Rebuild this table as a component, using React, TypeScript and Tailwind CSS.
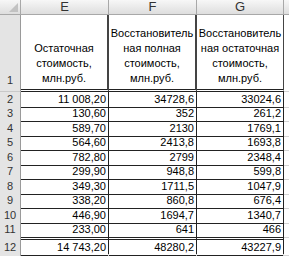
const rows: [string, string, string][] = [
  ["11 008,20", "34728,6", "33024,6"],
  ["130,60", "352", "261,2"],
  ["589,70", "2130", "1769,1"],
  ["564,60", "2413,8", "1693,8"],
  ["782,80", "2799", "2348,4"],
  ["299,90", "948,8", "599,8"],
  ["349,30", "1711,5", "1047,9"],
  ["338,20", "860,8", "676,4"],
  ["446,90", "1694,7", "1340,7"],
  ["233,00", "641", "466"],
];
const total: [string, string, string] = ["14 743,20", "48280,2", "43227,9"];

const grid = "grid grid-cols-[21px_88px_88px_87px_5px]";
const rowHead = "flex items-end justify-center border-r border-b border-r-[#9a9a9a] border-b-[#c9c9c9] bg-[#e4e4e4] text-[#333]";
const cell = "flex items-end justify-end border-r border-b border-[#222] pr-[2px] pb-[0px]";

function Row({ n, vals, h, last }: { n: number; vals: string[]; h: string; last?: boolean }) {
  return (
    <div className={`${grid} ${h}`}>
      <div className={rowHead}>{n}</div>
      {vals.map((v, i) => (
        <div key={i} className={`${cell} ${last ? "" : ""}`}>
          {v}
        </div>
      ))}
      <div className="border-b border-[#d4d4d4]" />
    </div>
  );
}

export default function App() {
  return (
    <div className="h-[256px] w-[289px] overflow-hidden bg-white font-['Liberation_Sans',Arial,sans-serif] text-[11px] leading-[15px] text-black">
      {/* column letters */}
      <div className={`${grid} h-[15px] bg-gradient-to-b from-[#f7f7f7] to-[#dcdcdc] text-[13px] leading-[14px] text-[#333]`}>
        <div className="relative border-r border-b border-[#a8a8a8]">
          <div className="absolute bottom-[2px] right-[2px] h-0 w-0 border-l-[9px] border-t-[9px] border-l-transparent border-t-transparent border-b-0 border-r-0 [border-bottom:9px_solid_#c2c2c2] [border-left:9px_solid_transparent]" />
        </div>
        <div className="flex items-center justify-center border-r border-b border-[#a8a8a8]">E</div>
        <div className="flex items-center justify-center border-r border-b border-[#a8a8a8]">F</div>
        <div className="flex items-center justify-center border-r border-b border-[#a8a8a8]">G</div>
        <div className="border-b border-[#a8a8a8]" />
      </div>

      {/* header row 1 */}
      <div className={`${grid} h-[77px]`}>
        <div className={`${rowHead} border-b-[#333] pb-[3px]`}>1</div>
        <div className="flex items-end justify-center border-r-2 border-b-[3px] border-double border-r-[#444] border-b-[#222] pb-[3px] text-center">
          Остаточная<br />стоимость,<br />млн.руб.
        </div>
        <div className="flex items-end justify-center border-r-2 border-b-[3px] border-double border-r-[#444] border-b-[#222] pb-[3px] text-center">
          Восстановитель<br />ная полная<br />стоимость,<br />млн.руб.
        </div>
        <div className="flex items-end justify-center border-r border-b-[3px] border-double border-r-[#444] border-b-[#222] pb-[3px] text-center">
          Восстановитель<br />ная остаточная<br />стоимость,<br />млн.руб.
        </div>
        <div className="border-b border-[#d4d4d4]" />
      </div>

      {rows.map((r, i) => (
        <Row key={i} n={i + 2} vals={r} h={i % 2 === 0 ? "h-[14px]" : "h-[15px]"} />
      ))}

      {/* total row */}
      <div className={`${grid} h-[17px]`}>
        <div className={rowHead}>12</div>
        {total.map((v, i) => (
          <div key={i} className="flex items-end justify-end border-t-[3px] border-r border-b border-double border-[#222] pr-[2px]">
            {v}
          </div>
        ))}
        <div className="border-b border-[#d4d4d4]" />
      </div>
      <div className={`${grid} h-[15px]`}>
        <div className="border-r border-r-[#9a9a9a] bg-[#e4e4e4]" />
        <div className="border-r border-[#d4d4d4]" />
        <div className="border-r border-[#d4d4d4]" />
        <div className="border-r border-[#d4d4d4]" />
        <div />
      </div>
    </div>
  );
}
